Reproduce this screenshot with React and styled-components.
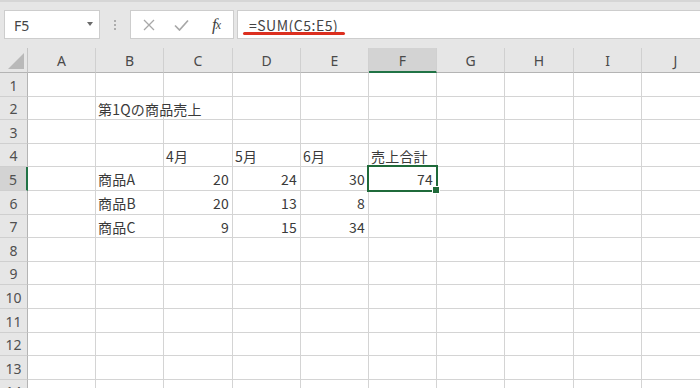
import React from "react";
import styled, { createGlobalStyle } from "styled-components";

const GlobalStyle = createGlobalStyle`
  html, body {
    margin: 0;
    padding: 0;
    background: #ffffff;
    overflow: hidden;
  }
  * {
    box-sizing: border-box;
  }
`;

const Window = styled.div`
  width: 700px;
  height: 388px;
  overflow: hidden;
  display: flex;
  flex-direction: column;
  background: #ffffff;
  font-family: "Noto Sans", "Noto Sans CJK JP", sans-serif;
`;

const FormulaBar = styled.div`
  height: 48px;
  flex: none;
  display: flex;
  align-items: flex-start;
  padding: 10px 0 0 4px;
  background: #e6e6e6;
  border-top: 2px solid #d6d6d6;
`;

const NameBox = styled.div`
  width: 96px;
  height: 29px;
  margin-top: -2px;
  display: flex;
  align-items: center;
  justify-content: space-between;
  padding: 2px 6px 0 9px;
  background: #ffffff;
  border: 1px solid #cdcdcd;
  font-size: 14px;
  color: #444;
`;

const Caret = styled.span`
  width: 0;
  height: 0;
  border-left: 3.5px solid transparent;
  border-right: 3.5px solid transparent;
  border-top: 4px solid #6a6a6a;
  margin-top: -3px;
`;

const Grip = styled.div`
  width: 30px;
  height: 29px;
  margin-top: -2px;
  display: flex;
  flex-direction: column;
  align-items: center;
  justify-content: center;
  gap: 2px;
`;

const Dot = styled.span`
  width: 2px;
  height: 2px;
  border-radius: 1px;
  background: #9a9a9a;
`;

const ActionBox = styled.div`
  width: 104px;
  height: 29px;
  margin-top: -2px;
  display: flex;
  align-items: center;
  padding: 0 0 0 7px;
  gap: 10px;
  background: #ffffff;
  border: 1px solid #cdcdcd;
`;

const ActionIcon = styled.span`
  width: 22px;
  display: flex;
  justify-content: center;
  align-items: center;
`;

const Fx = styled.span`
  font-family: "Liberation Serif", serif;
  font-style: italic;
  font-size: 17px;
  color: #3f3f3f;
  margin-left: 6px;
  letter-spacing: -1px;

  sub {
    font-size: 12px;
    vertical-align: 1px;
  }
`;

const FormulaInput = styled.div`
  position: relative;
  flex: 1;
  height: 29px;
  margin-top: -2px;
  margin-left: 3px;
  display: flex;
  align-items: center;
  padding: 1px 0 0 11px;
  background: #ffffff;
  border: 1px solid #cdcdcd;
  border-right: none;
  font-family: "Noto Sans CJK JP", sans-serif;
  font-size: 14px;
  letter-spacing: 0.5px;
  color: #444;
`;

const Underline = styled.span`
  position: absolute;
  left: 5px;
  top: 21px;
  width: 102px;
  height: 3px;
  border-radius: 2px;
  background: #dc2f1f;
`;

const colLines = [27, 95, 163, 232, 300, 368, 436, 504, 573, 641, 709];
const rowLines = [47, 72, 96, 119, 143, 166, 190, 214, 237, 261, 284, 308, 332, 355, 379, 402];

const columnTemplate = colLines
  .map((x, i) => (i === 0 ? x + 1 : x - colLines[i - 1]))
  .map((w) => `${w}px`)
  .join(" ");

const rowTemplate = rowLines
  .slice(1)
  .map((y, i) => `${y - rowLines[i]}px`)
  .join(" ");

const Sheet = styled.div`
  display: grid;
  grid-template-columns: ${columnTemplate};
  grid-template-rows: ${rowTemplate};
  flex: none;
`;

const Corner = styled.div`
  position: relative;
  background: #e6e6e6;
  border-right: 1px solid #c4c4c4;
  border-bottom: 1px solid #b4b4b4;

  &::after {
    content: "";
    position: absolute;
    right: 3px;
    bottom: 3px;
    width: 16px;
    height: 16px;
    background: #b9b9b9;
    clip-path: polygon(100% 0, 100% 100%, 0 100%);
  }
`;

const ColHeader = styled.div`
  display: flex;
  align-items: center;
  justify-content: center;
  padding-top: 1px;
  background: ${(p) => (p.active ? "#d3d3d3" : "#e6e6e6")};
  border-right: 1px solid #d0d0d0;
  border-bottom: ${(p) => (p.active ? "2px solid #217346" : "1px solid #b4b4b4")};
  font-size: 14px;
  color: #4a4a4a;
`;

const RowHeader = styled.div`
  display: flex;
  align-items: center;
  justify-content: center;
  padding-top: 1px;
  background: ${(p) => (p.active ? "#d3d3d3" : "#e6e6e6")};
  border-right: ${(p) => (p.active ? "2px solid #217346" : "1px solid #b4b4b4")};
  border-bottom: 1px solid #cfcfcf;
  font-size: 14px;
  color: #505050;
`;

const Cell = styled.div`
  position: ${(p) => (p.selected ? "relative" : "static")};
  display: flex;
  align-items: center;
  justify-content: ${(p) => (p.numeric ? "flex-end" : "flex-start")};
  padding: 1px 3px 0 2px;
  background: #ffffff;
  border-right: 1px solid #d4d4d4;
  border-bottom: 1px solid #d4d4d4;
  font-family: "Noto Sans CJK JP", sans-serif;
  font-size: 14px;
  letter-spacing: 0.2px;
  color: #3a3a3a;
  white-space: nowrap;
  overflow: visible;
`;

const Selection = styled.span`
  position: absolute;
  top: -2px;
  left: -2px;
  right: -2px;
  bottom: -2px;
  border: 2px solid #1f6a3a;
  pointer-events: none;
  z-index: 2;

  &::after {
    content: "";
    position: absolute;
    right: -4px;
    bottom: -4px;
    width: 6px;
    height: 6px;
    background: #1f6a3a;
    border: 1px solid #ffffff;
  }
`;

const CellText = styled.span`
  position: relative;
  z-index: 3;
`;

const columns = ["A", "B", "C", "D", "E", "F", "G", "H", "I", "J"];

const data = {
  B2: "第1Qの商品売上",
  C4: "4月",
  D4: "5月",
  E4: "6月",
  F4: "売上合計",
  B5: "商品A",
  C5: 20,
  D5: 24,
  E5: 30,
  F5: 74,
  B6: "商品B",
  C6: 20,
  D6: 13,
  E6: 8,
  B7: "商品C",
  C7: 9,
  D7: 15,
  E7: 34,
};

const activeCol = "F";
const activeRow = 5;

export default function App() {
  const rows = Array.from({ length: 14 }, (_, i) => i + 1);

  return (
    <Window>
      <GlobalStyle />
      <FormulaBar>
        <NameBox>
          F5
          <Caret />
        </NameBox>
        <Grip>
          <Dot />
          <Dot />
          <Dot />
        </Grip>
        <ActionBox>
          <ActionIcon>
            <svg width="12" height="12" viewBox="0 0 12 12">
              <path d="M1 1 L11 11 M11 1 L1 11" stroke="#a8a8a8" strokeWidth="1.3" fill="none" />
            </svg>
          </ActionIcon>
          <ActionIcon>
            <svg width="15" height="12" viewBox="0 0 15 12">
              <path d="M1 6.5 L5.5 11 L14 1.5" stroke="#a8a8a8" strokeWidth="1.7" fill="none" />
            </svg>
          </ActionIcon>
          <ActionIcon>
            <Fx>
              f<sub>x</sub>
            </Fx>
          </ActionIcon>
        </ActionBox>
        <FormulaInput>
          =SUM(C5:E5)
          <Underline />
        </FormulaInput>
      </FormulaBar>
      <Sheet>
        <Corner />
        {columns.map((c) => (
          <ColHeader key={c} active={c === activeCol}>
            {c}
          </ColHeader>
        ))}
        {rows.map((r) => (
          <React.Fragment key={r}>
            <RowHeader active={r === activeRow}>{r}</RowHeader>
            {columns.map((c) => {
              const value = data[c + r];
              const selected = c === activeCol && r === activeRow;
              return (
                <Cell key={c} numeric={typeof value === "number"} selected={selected}>
                  {value !== undefined && <CellText>{value}</CellText>}
                  {selected && <Selection />}
                </Cell>
              );
            })}
          </React.Fragment>
        ))}
      </Sheet>
    </Window>
  );
}
